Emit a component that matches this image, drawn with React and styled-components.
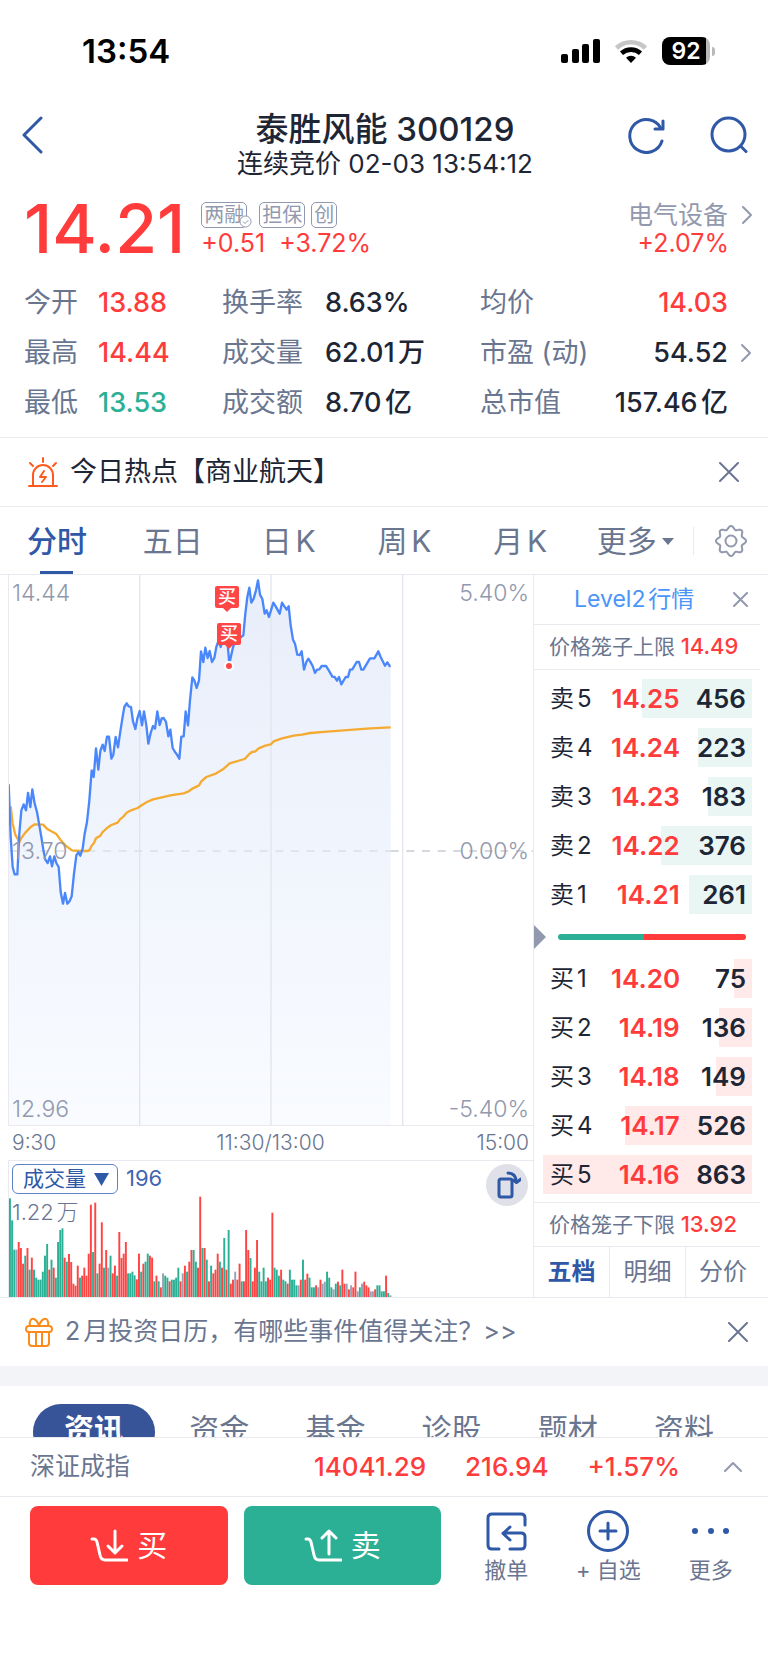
import React from 'react'

import styled, {createGlobalStyle} from 'styled-components'

const red = '#ff3b3b'
const green = '#2cb095'
const blue = '#2f58a6'
const dark = '#1e2635'
const slate = '#6a7690'
const muted = '#9299ae'
const line = '#e9e9ef'

const GlobalStyle = createGlobalStyle`
    * {
        box-sizing: border-box;
    }
    body {
        margin: 0;
        background: #fff;
        color: ${dark};
        font-family: Inter, "Noto Sans CJK SC", sans-serif;
        line-height: 1.25;
        text-autospace: normal;
    }
    button {
        padding: 0;
        border: none;
        background: none;
        color: inherit;
        font: inherit;
        cursor: pointer;
    }
    svg {
        display: block;
        flex: none;
    }
    a {
        color: inherit;
        text-decoration: none;
    }
    dl, dt, dd {
        margin: 0;
    }
`

const StatusBar = styled.div`
    display: flex;
    justify-content: space-between;
    align-items: center;
    padding: 34px 53px 0 82px;
    color: #000;
    font-size: 33px;
    font-weight: 600;
    line-height: 34px;
`

const StatusIcons = styled.div`
    display: flex;
    align-items: center;
    gap: 14px;
`

const Battery = styled.div`
    display: flex;
    align-items: center;
    gap: 2px;
    span {
        width: 48px;
        height: 28px;
        border-radius: 8px;
        background: linear-gradient(90deg, #000 92%, #b9b9b9 92%);
        color: #fff;
        font-size: 23px;
        line-height: 28px;
        text-align: center;
    }
    i {
        width: 3px;
        height: 9px;
        border-radius: 0 4px 4px 0;
        background: #b9b9b9;
    }
`

const Header = styled.header`
    display: grid;
    grid-template-columns: 1fr auto 1fr;
    margin-top: 43px;
    padding: 0 20px 0 22px;
    color: ${blue};
    button {
        height: 48px;
    }
`

const HeaderTitle = styled.div`
    color: ${dark};
    text-align: center;
    h1 {
        margin: 0;
        font-size: 33px;
        font-weight: 500;
        line-height: 36px;
    }
    p {
        margin: 0;
        font-size: 26px;
        line-height: 34px;
    }
`

const HeaderActions = styled.div`
    display: flex;
    justify-content: flex-end;
    align-items: flex-start;
    gap: 45px;
`

const Quote = styled.section`
    display: flex;
    align-items: flex-start;
    margin-top: 17px;
    padding: 0 15px 0 24px;
    color: ${red};
`

const Price = styled.strong`
    font-size: 68px;
    font-weight: 500;
    line-height: 60px;
`

const QuoteColumn = styled.div`
    display: flex;
    flex-direction: column;
    padding-top: 4px;
    font-size: 25px;
    line-height: 30px;
    margin-left: ${props => props.end ? 'auto' : '16px'};
    align-items: ${props => props.end ? 'flex-end' : 'flex-start'};
`

const Tags = styled.div`
    display: flex;
    gap: 6px;
    height: 26px;
`

const Tag = styled.span`
    position: relative;
    padding: 0 2px;
    margin-right: ${props => props.checked ? '6px' : '0'};
    border: 1px solid ${muted};
    border-radius: 5px;
    color: ${muted};
    font-size: 20px;
    line-height: 25px;
    svg {
        position: absolute;
        right: -6px;
        bottom: -1px;
    }
`

const Change = styled.div`
    display: flex;
    gap: 14px;
`

const Industry = styled.a`
    display: flex;
    align-items: center;
    gap: 13px;
    color: ${muted};
    line-height: 26px;
`

const IndustryChange = styled.div`
    padding-right: 24px;
`

const Metrics = styled.dl`
    display: grid;
    grid-template-columns: 74fr 124fr 103fr 155fr 248fr 24px;
    align-items: center;
    margin-top: 20px;
    padding: 0 16px 0 24px;
    font-size: 27px;
    line-height: 50px;
    white-space: nowrap;
    dt {
        color: ${slate};
    }
`

const MetricPair = styled.div`
    display: contents;
`

// the third value of a row shares its column with its label
const WidePair = styled.div`
    display: flex;
    justify-content: space-between;
`

const MetricValue = styled.dd`
    color: ${props => props.color || dark};
    font-weight: 500;
`

const MetricLink = styled.a`
    display: flex;
    justify-content: flex-end;
`

const Banner = styled.div`
    display: flex;
    align-items: center;
    height: 68px;
    padding: 0 20px 0 25px;
    color: ${slate};
    font-size: 25px;
    a {
        flex: 1;
        margin-left: 12px;
    }
    button {
        color: ${slate};
    }
`

const HotBanner = styled(Banner)`
    height: 70px;
    margin-top: 9px;
    padding: 0 29px 0 28px;
    border: solid ${line};
    border-width: 1px 0;
    color: ${dark};
    font-size: 27px;
`

const PeriodTabs = styled.nav`
    display: grid;
    grid-template-columns: repeat(5, 116fr) 114fr 75fr;
    height: 67px;
    font-size: 30px;
`

const PeriodTab = styled.button`
    && {
        position: relative;
        display: flex;
        justify-content: center;
        align-items: center;
        gap: 5px;
        padding: 2px 2px 0 0;
        color: ${props => props.active ? blue : slate};
        font-weight: ${props => props.active ? 500 : 400};
    }
    &::after {
        content: '';
        position: absolute;
        bottom: 0;
        width: 33px;
        height: 3px;
        background: ${props => props.active ? blue : 'transparent'};
    }
`

const SettingsButton = styled.button`
    display: flex;
    justify-content: center;
    align-items: center;
    align-self: center;
    height: 28px;
    && {
        border-left: 1px solid ${line};
        color: ${muted};
    }
`

const Market = styled.section`
    display: grid;
    grid-template-columns: 533fr 235fr;
    border: solid ${line};
    border-width: 1px 0;
`

const Charts = styled.div`
    padding-left: 8px;
    color: ${muted};
`

const Plot = styled.div`
    position: relative;
    display: flex;
    flex-direction: column;
    justify-content: space-between;
    height: 551px;
    border: solid ${line};
    border-width: 0 0 1px 1px;
    svg {
        position: absolute;
        left: 0;
        top: 0;
        width: 100%;
        height: 100%;
    }
`

const ScaleRow = styled.div`
    position: relative;
    display: flex;
    justify-content: space-between;
    padding: 2px 4px 0 3px;
    font-size: 23px;
    font-weight: 300;
    line-height: 32px;
`

const BuyMarker = styled.span`
    position: absolute;
    width: 24px;
    height: 22px;
    margin-left: -12px;
    border-radius: 2px;
    background: #ff4646;
    color: #fff;
    font-size: 18px;
    font-weight: 500;
    line-height: 22px;
    text-align: center;
    &::after {
        content: '';
        position: absolute;
        left: 8px;
        top: 22px;
        border: 4px solid transparent;
        border-top-color: #ff4646;
    }
`

const TradeDot = styled.i`
    position: absolute;
    left: 42%;
    top: 86px;
    width: 10px;
    height: 10px;
    margin-left: -5px;
    border: 2px solid #fff;
    border-radius: 50%;
    background: #ff4646;
`

const TimeAxis = styled.div`
    display: grid;
    grid-template-columns: 1fr auto 1fr;
    padding: 0 4px;
    border-bottom: 1px solid ${line};
    color: ${slate};
    font-size: 21px;
    font-weight: 300;
    line-height: 34px;
    span:last-child {
        text-align: right;
    }
`

const Volume = styled.div`
    position: relative;
    height: 136px;
    padding: 3px 5px 0 3px;
    border-left: 1px solid ${line};
    color: ${slate};
    font-size: 22px;
    > svg {
        position: absolute;
        left: 0;
        bottom: 0;
        width: 100%;
        height: 101px;
    }
    p {
        position: relative;
        margin: 0;
        font-size: 22px;
        font-weight: 300;
        line-height: 36px;
    }
`

const VolumeHead = styled.div`
    display: flex;
    align-items: center;
    gap: 8px;
    height: 30px;
    color: #3f66b3;
    button {
        display: flex;
        align-items: center;
        gap: 8px;
        height: 30px;
        padding: 0 8px 0 10px;
        border: 1px solid #5f82c4;
        border-radius: 6px;
        color: ${blue};
        font-size: 21px;
    }
`

const RotateButton = styled.button`
    position: absolute;
    right: 5px;
    top: 3px;
    display: flex;
    justify-content: center;
    align-items: center;
    width: 42px;
    height: 42px;
    && {
        border-radius: 50%;
        background: #e0e0e9;
        color: ${blue};
    }
`

const OrderBook = styled.aside`
    padding-right: 8px;
    border-left: 1px solid ${line};
`

const LevelLink = styled.div`
    display: flex;
    justify-content: space-between;
    align-items: center;
    height: 50px;
    padding: 0 12px 0 40px;
    border-bottom: 1px solid ${line};
    color: #4b95f8;
    font-size: 23px;
    button {
        color: ${muted};
    }
`

const CageLimit = styled.div`
    height: 45px;
    padding-left: 15px;
    border: solid ${line};
    border-width: ${props => props.lower ? '1px 0' : '0 0 1px'};
    color: ${slate};
    font-size: 21px;
    line-height: 43px;
    white-space: nowrap;
    b {
        margin-left: 3px;
        color: ${red};
        font-size: 22px;
        font-weight: 500;
    }
`

const Depth = styled.div`
    position: relative;
    padding: ${props => props.sell ? '9px 8px 0 9px' : '0 8px 8px 9px'};
`

const DepthTable = styled.table`
    display: block;
    position: relative;
    tbody {
        display: grid;
        gap: 10px;
    }
`

const DepthRow = styled.tr`
    display: grid;
    grid-template-columns: 62fr 69fr 67fr;
    padding: 0 6px 0 7px;
    line-height: 39px;
    td, th {
        padding: 0;
        font-size: 26px;
        font-weight: 600;
        text-align: right;
        white-space: nowrap;
    }
    th {
        font-size: 24px;
        font-weight: 400;
        text-align: left;
    }
    td:nth-child(2) {
        color: ${red};
    }
`

// lies under the table, one bar for each of its rows
const DepthBars = styled.div`
    position: absolute;
    left: 9px;
    right: 8px;
    display: grid;
    justify-items: end;
    gap: 10px;
`

const DepthBar = styled.div`
    height: 39px;
    background: ${props => props.sell ? '#e9f6f3' : '#ffe9e9'};
`

const BalanceRow = styled.div`
    display: flex;
    align-items: center;
    gap: 12px;
    height: 45px;
    padding-right: 14px;
`

const Balance = styled.div`
    flex: 1;
    height: 6px;
    border-radius: 3px;
    background: linear-gradient(90deg, ${green} 46%, ${red} 46%);
`

const BookTabs = styled.div`
    display: grid;
    grid-template-columns: 75fr 76fr 75fr;
    height: 50px;
`

const BookTab = styled.button`
    && {
        border-left: ${props => props.active ? 'none' : `1px solid ${line}`};
        color: ${props => props.active ? blue : slate};
        font-size: 24px;
        font-weight: ${props => props.active ? 700 : 400};
    }
`

const Divider = styled.div`
    height: 20px;
    background: #f3f4f7;
`

const InfoTabs = styled.nav`
    display: grid;
    grid-template-columns: 128fr repeat(5, 116fr);
    align-items: start;
    height: 51px;
    padding: 18px 26px 0 33px;
    overflow: hidden;
`

const InfoTab = styled.button`
    && {
        height: 56px;
        margin-right: ${props => props.active ? '6px' : '0'};
        padding-bottom: 4px;
        border-radius: 28px;
        background: ${props => props.active ? '#385499' : 'none'};
        color: ${props => props.active ? '#fff' : slate};
        font-size: 30px;
        font-weight: ${props => props.active ? 700 : 400};
    }
`

const IndexBar = styled.div`
    display: flex;
    align-items: center;
    gap: 39px;
    height: 60px;
    padding: 0 25px 0 30px;
    border: solid ${line};
    border-width: 1px 0;
    color: ${red};
    font-size: 26px;
    font-weight: 500;
    span {
        flex: 1;
        color: ${slate};
        font-size: 25px;
        font-weight: 400;
    }
    button {
        margin-left: 4px;
        color: ${muted};
    }
`

const BottomBar = styled.footer`
    display: grid;
    grid-template-columns: 411fr 307fr;
    gap: 14px;
    padding: 9px 6px 78px 30px;
`

const TradeButtons = styled.div`
    display: grid;
    grid-template-columns: 1fr 1fr;
    gap: 16px;
`

const TradeButton = styled.button`
    && {
        display: flex;
        justify-content: center;
        align-items: center;
        gap: 9px;
        height: 79px;
        border-radius: 8px;
        background: ${props => props.sell ? green : red};
        color: #fff;
        font-size: 30px;
    }
`

const Tools = styled.div`
    display: grid;
    grid-template-columns: repeat(3, 1fr);
`

const Tool = styled.button`
    && {
        display: flex;
        flex-direction: column;
        align-items: center;
        gap: 3px;
        padding-top: 4px;
        color: ${slate};
        font-size: 22px;
        line-height: 30px;
    }
    svg {
        color: ${blue};
    }
`

const Icon = ({w, h, stroke = 2, children}) => (
    <svg width={w} height={h} viewBox={`0 0 ${w} ${h}`} fill="none" stroke="currentColor"
        strokeWidth={stroke} strokeLinecap="round" strokeLinejoin="round" aria-hidden="true">
        {children}
    </svg>
)

const CloseIcon = ({size = 20}) => (
    <Icon w={size} h={size}><path d={`M1 1L${size - 1} ${size - 1}M${size - 1} 1L1 ${size - 1}`} /></Icon>
)

const ArrowRight = () => (
    <Icon w={12} h={20}><path d="M2 2l8 8-8 8" stroke={muted} /></Icon>
)

const metrics = [
    [['今开', '13.88', red], ['换手率', '8.63%'], ['均价', '14.03', red]],
    [['最高', '14.44', red], ['成交量', '62.01万'], ['市盈 (动)', '54.52', dark, '#pe']],
    [['最低', '13.53', green], ['成交额', '8.70亿'], ['总市值', '157.46亿']],
]

const sells = [['卖5', '14.25', 456], ['卖4', '14.24', 223], ['卖3', '14.23', 183], ['卖2', '14.22', 376], ['卖1', '14.21', 261]]
const buys = [['买1', '14.20', 75], ['买2', '14.19', 136], ['买3', '14.18', 149], ['买4', '14.17', 526], ['买5', '14.16', 863]]

// places of the buy orders in the plot, in percent
const trades = [{x: 41.6, y: 2}, {x: 42, y: 8.8}]

const pricePoints = `25,642 31,800 37,890 43,912 51,912 57,790 63,720 70,702 77,720 83,668 90,710 96,657
    103,700 110,725 117,765 123,800 129,838 135,868 142,878 149,858 155,888 162,858 168,878 175,890
    181,965 188,1000 194,968 201,1000 208,992 214,978 221,910 228,855 234,846 240,856 247,835 253,790
    260,755 267,690 274,600 280,620 287,534 294,598 300,542 307,523 313,542 320,499 326,499 333,565
    339,553 346,500 353,531 359,490 366,445 372,410 379,399 385,408 392,410 398,453 405,476 411,445
    418,422 425,465 431,423 438,465 444,520 451,488 458,467 464,475 471,423 478,464 484,444 490,443
    497,455 504,498 510,478 517,533 524,545 530,553 537,565 543,499 550,498 556,423 563,465 569,390
    576,321 582,330 589,353 596,330 602,243 609,275 615,232 622,263 628,242 635,275 642,263 648,230
    655,210 661,230 668,205 681,210 687,280 697,235 703,215 710,200 722,200 729,195 735,130 741,80
    747,52 753,97 760,85 767,60 773,30 779,73 786,86 793,130 799,120 806,140 819,97 826,108 838,130
    845,97 852,108 859,118 865,108 871,165 878,208 884,220 891,253 898,254 904,243 911,298 918,275
    924,265 931,276 937,287 944,308 950,298 957,297 964,287 977,287 984,298 996,319 1003,320 1010,331
    1016,320 1023,342 1036,320 1043,320 1049,298 1056,297 1069,275 1076,275 1083,298 1089,298 1109,264
    1122,264 1134,243 1141,260 1154,286 1161,276 1168,287 1171,287`

const averagePoints = `31,708 37,760 45,793 57,815 63,803 75,787 90,771 103,762 128,763 142,777 168,791
    180,808 195,825 215,840 240,842 262,842 268,838 274,826 281,818 287,804 300,796 306,786 320,773
    333,764 352,757 359,747 370,738 379,727 392,720 412,713 425,704 440,695 458,687 485,681 510,675
    550,669 565,663 578,654 596,645 603,633 618,620 648,609 668,597 688,579 733,566 745,553 755,545
    765,543 775,534 795,526 812,522 820,513 845,504 880,496 905,493 930,488 990,483 1060,478 1110,474
    1171,471`

// one bar a minute: r up, g down, n flat
const volumes = `g296 g230 g142 n142 r165 r147 r100 g124 r147 g82 r118 g82 g58 g52 g52 g76 g124 g159 r82
    g112 r88 g58 g165 g201 g206 r118 g106 r129 r105 r40 r34 r94 g58 r64 r88 r64 r130 r277 g135 r283
    g71 r100 r224 g88 r141 n88 g124 r71 r94 g64 r195 r117 r130 r165 g71 g71 g76 g65 r53 r130 g76 r100
    g106 g130 r124 r118 g47 r64 g47 r29 n71 g64 g58 r47 g52 g52 g58 g88 r47 n71 r94 g76 r106 r141
    g141 g106 r88 r301 g147 r147 g112 r47 g94 r71 r82 r130 g106 r88 g177 r82 g201 r40 r52 n76 r52
    r100 g47 r47 r201 r141 g117 r47 r88 r171 g76 g47 g88 g47 r58 r52 r253 g88 g82 g64 r82 g52 g47
    r40 g82 g52 g52 g35 n35 r52 g112 r52 r70 g58 g29 g29 r35 n29 r52 n40 n46 g76 g58 g29 n23 g40
    r46 g35 r82 r40 n40 r23 n35 r29 r76 n17 g29 n40 r46 r35 r29 n17 n17 r23 g35 g35 g17 g17 r64 g12
    n5`.split(/\s+/)

const barColors = {r: '#ff4444', g: green, n: '#9aa1b3'}

const PriceChart = () => (
    <svg viewBox="26 14 1572 1650" preserveAspectRatio="none" fill="none" aria-hidden="true">
        <defs>
            <linearGradient id="area" x1="0" y1="0" x2="0" y2="1">
                <stop offset="0" stopColor="#e8eefa" />
                <stop offset="1" stopColor="#f9fbff" />
            </linearGradient>
        </defs>
        <polygon points={`25,1664 ${pricePoints} 1171,1664`} fill="url(#area)" />
        <path d="M418 14V1664M812 14V1664M1207 14V1664" stroke="#e4e5ec" strokeWidth="4" />
        <path d="M26 842H1171" stroke="#dcdee8" strokeWidth="5" strokeDasharray="24 23" />
        <path d="M1171 842H1600" stroke="#c9cbd7" strokeWidth="5" strokeDasharray="24 23" />
        <polyline points={averagePoints} stroke="#f5aa31" strokeWidth="7" strokeLinejoin="round" />
        <polyline points={pricePoints} stroke="#4a87fb" strokeWidth="7" strokeLinejoin="round" />
    </svg>
)

const VolumeChart = () => (
    <svg viewBox="27 289 1572 303" preserveAspectRatio="none" aria-hidden="true">
        {volumes.map((item, i) => (
            <rect key={i} x={27 + i * 6.56} y={592 - item.slice(1)} width="5.8"
                height={item.slice(1)} fill={barColors[item[0]]} />
        ))}
    </svg>
)

const DepthBlock = ({rows, sell}) => (
    <Depth sell={sell}>
        <DepthBars>
            {rows.map(([label, , amount]) => (
                <DepthBar key={label} sell={sell} style={{width: `${amount / 8.63}%`}} />
            ))}
        </DepthBars>
        <DepthTable>
            <tbody>
                {rows.map(([label, price, amount]) => (
                    <DepthRow key={label}>
                        <th scope="row">{label}</th>
                        <td>{price}</td>
                        <td>{amount}</td>
                    </DepthRow>
                ))}
            </tbody>
        </DepthTable>
    </Depth>
)

const SignalIcons = () => (
    <StatusIcons>
        <svg width="39" height="24" viewBox="0 0 39 24" aria-hidden="true">
            <rect x="0" y="15" width="7" height="9" rx="2" />
            <rect x="11" y="10" width="7" height="14" rx="2" />
            <rect x="21" y="5" width="7" height="19" rx="2" />
            <rect x="32" y="0" width="7" height="24" rx="2" />
        </svg>
        <svg width="34" height="24" viewBox="0 0 34 24" fill="none" strokeWidth="4.6" aria-hidden="true">
            <path d="M2.500 9a21 21 0 0 1 29 0" stroke="#c6c6c6" />
            <path d="M7.500 14.300a14 14 0 0 1 19 0" stroke="#000" />
            <path d="M17 24l-5-5.200a7.400 7.400 0 0 1 10 0z" fill="#000" />
        </svg>
        <Battery><span>92</span><i /></Battery>
    </StatusIcons>
)

const gear = Array.from({length: 65}, (_, i) => {
    const angle = i / 64 * Math.PI * 2
    const r = 13.4 + 1.7 * Math.cos(angle * 8)
    return `${(16 + r * Math.sin(angle)).toFixed(2)},${(16 - r * Math.cos(angle)).toFixed(2)}`
}).join(' ')

export default function App() {
    return (
        <>
            <GlobalStyle />
            <StatusBar>
                <span>13:54</span>
                <SignalIcons />
            </StatusBar>

            <Header>
                <div>
                    <button type="button" aria-label="返回">
                        <Icon w={22} h={38} stroke={3}><path d="M19 2L2 19l17 17" /></Icon>
                    </button>
                </div>
                <HeaderTitle>
                    <h1>泰胜风能 300129</h1>
                    <p>连续竞价 02-03 13:54:12</p>
                </HeaderTitle>
                <HeaderActions>
                    <button type="button" aria-label="刷新">
                        <Icon w={38} h={38} stroke={3}>
                            <path d="M35 25A16.500 16.500 0 1 1 34 12.500" />
                            <path d="M36 5v8h-8" />
                        </Icon>
                    </button>
                    <button type="button" aria-label="搜索">
                        <Icon w={38} h={38} stroke={3}>
                            <circle cx="18.500" cy="18.500" r="16.500" />
                            <path d="M30.500 30l5.500 5.500" />
                        </Icon>
                    </button>
                </HeaderActions>
            </Header>

            <Quote>
                <Price>14.21</Price>
                <QuoteColumn>
                    <Tags>
                        <Tag checked>
                            两融
                            <svg width="13" height="13" viewBox="0 0 13 13" fill="#fff" stroke={muted} aria-hidden="true">
                                <circle cx="6.500" cy="6.500" r="5.500" />
                                <path d="M4 6.500l2 2 3.500-3.500" fill="none" />
                            </svg>
                        </Tag>
                        <Tag>担保</Tag>
                        <Tag>创</Tag>
                    </Tags>
                    <Change><span>+0.51</span><span>+3.72%</span></Change>
                </QuoteColumn>
                <QuoteColumn end>
                    <Industry href="#industry">电气设备<ArrowRight /></Industry>
                    <IndustryChange>+2.07%</IndustryChange>
                </QuoteColumn>
            </Quote>

            <Metrics>
                {metrics.map(row => row.map(([label, value, color, href], j) => {
                    const Pair = j === 2 ? WidePair : MetricPair
                    return (
                        <React.Fragment key={label}>
                            <Pair>
                                <dt>{label}</dt>
                                <MetricValue color={color}>{value}</MetricValue>
                            </Pair>
                            {j === 2 && (
                                <div>
                                    {href && <MetricLink href={href} aria-label={label}><ArrowRight /></MetricLink>}
                                </div>
                            )}
                        </React.Fragment>
                    )
                }))}
            </Metrics>

            <HotBanner>
                <svg width="30" height="30" viewBox="0 0 30 30" fill="none" stroke="#ff5a1f" strokeWidth="2" strokeLinecap="round" aria-hidden="true">
                    <path d="M1 29h28M5 29V18a10 10 0 0 1 20 0v11" />
                    <path d="M15 1v4M2 6l3 3M28 6l-3 3" />
                    <path d="M16 14l-4 6h6l-4 5" strokeLinejoin="round" />
                </svg>
                <a href="#hot">今日热点【商业航天】</a>
                <button type="button" aria-label="关闭"><CloseIcon /></button>
            </HotBanner>

            <PeriodTabs>
                <PeriodTab type="button" active>分时</PeriodTab>
                <PeriodTab type="button">五日</PeriodTab>
                <PeriodTab type="button">日K</PeriodTab>
                <PeriodTab type="button">周K</PeriodTab>
                <PeriodTab type="button">月K</PeriodTab>
                <PeriodTab type="button">
                    更多
                    <svg width="12" height="7" viewBox="0 0 12 7" fill={slate} aria-hidden="true"><path d="M0 0h12L6 7z" /></svg>
                </PeriodTab>
                <SettingsButton type="button" aria-label="设置">
                    <Icon w={32} h={32}>
                        <polygon points={gear} />
                        <circle cx="16" cy="16" r="5.500" />
                    </Icon>
                </SettingsButton>
            </PeriodTabs>

            <Market>
                <Charts>
                    <Plot>
                        <PriceChart />
                        <ScaleRow><span>14.44</span><span>5.40%</span></ScaleRow>
                        <ScaleRow><span>13.70</span><span>0.00%</span></ScaleRow>
                        <ScaleRow><span>12.96</span><span>-5.40%</span></ScaleRow>
                        {trades.map(({x, y}) => (
                            <BuyMarker key={y} style={{left: `${x}%`, top: `${y}%`}}>买</BuyMarker>
                        ))}
                        <TradeDot />
                    </Plot>
                    <TimeAxis><span>9:30</span><span>11:30/13:00</span><span>15:00</span></TimeAxis>
                    <Volume>
                        <VolumeChart />
                        <VolumeHead>
                            <button type="button">
                                成交量
                                <svg width="15" height="13" viewBox="0 0 15 13" fill={blue} aria-hidden="true"><path d="M0 0h15L7.500 13z" /></svg>
                            </button>
                            <span>196</span>
                        </VolumeHead>
                        <p>1.22万</p>
                        <RotateButton type="button" aria-label="横屏">
                            <Icon w={28} h={28} stroke={3}>
                                <rect x="6" y="8" width="13" height="18" rx="2" />
                                <path d="M15 2c5 0 8 3 8.500 9M23.500 11.500L28 8M23.500 11.500L20 9" />
                            </Icon>
                        </RotateButton>
                    </Volume>
                </Charts>

                <OrderBook>
                    <LevelLink>
                        <a href="#level2">Level2行情</a>
                        <button type="button" aria-label="关闭"><CloseIcon size={15} /></button>
                    </LevelLink>
                    <CageLimit>价格笼子上限<b>14.49</b></CageLimit>
                    <DepthBlock rows={sells} sell />
                    <BalanceRow>
                        <svg width="12" height="24" viewBox="0 0 12 24" fill={muted} aria-hidden="true"><path d="M0 0l12 12L0 24z" /></svg>
                        <Balance />
                    </BalanceRow>
                    <DepthBlock rows={buys} />
                    <CageLimit lower>价格笼子下限<b>13.92</b></CageLimit>
                    <BookTabs>
                        <BookTab type="button" active>五档</BookTab>
                        <BookTab type="button">明细</BookTab>
                        <BookTab type="button">分价</BookTab>
                    </BookTabs>
                </OrderBook>
            </Market>

            <Banner>
                <svg width="28" height="30" viewBox="0 0 28 30" fill="none" stroke="#fb8c1c" strokeWidth="2" aria-hidden="true">
                    <rect x="1" y="9" width="26" height="6" rx="3" />
                    <path d="M4 15v11a3 3 0 0 0 3 3h14a3 3 0 0 0 3-3V15M11 15v14M17 15v14" />
                    <path d="M5 9c-1-5 1-8 4-7 2 1 4 3 5 7 1-4 3-6 5-7 3-1 5 2 4 7" />
                </svg>
                <a href="#calendar">2月投资日历，有哪些事件值得关注？&gt;&gt;</a>
                <button type="button" aria-label="关闭"><CloseIcon /></button>
            </Banner>
            <Divider />

            <InfoTabs>
                <InfoTab type="button" active>资讯</InfoTab>
                {['资金', '基金', '诊股', '题材', '资料'].map(name => (
                    <InfoTab type="button" key={name}>{name}</InfoTab>
                ))}
            </InfoTabs>

            <IndexBar>
                <span>深证成指</span>
                <div>14041.29</div>
                <div>216.94</div>
                <div>+1.57%</div>
                <button type="button" aria-label="展开">
                    <Icon w={20} h={12}><path d="M2 10l8-8 8 8" /></Icon>
                </button>
            </IndexBar>

            <BottomBar>
                <TradeButtons>
                    <TradeButton type="button">
                        <Icon w={38} h={34} stroke={3}>
                            <path d="M2 10h2q2 0 3 3l3 13q1 5 5 5h22" />
                            <path d="M25 2v22M18 17l7 7 7-7" />
                        </Icon>
                        买
                    </TradeButton>
                    <TradeButton type="button" sell>
                        <Icon w={38} h={34} stroke={3}>
                            <path d="M2 10h2q2 0 3 3l3 13q1 5 5 5h22" />
                            <path d="M25 25V2M18 9l7-7 7 7" />
                        </Icon>
                        卖
                    </TradeButton>
                </TradeButtons>
                <Tools>
                    <Tool type="button">
                        <Icon w={42} h={42} stroke={3}>
                            <path d="M40 15V8q0-4-4-4H7Q3 4 3 8v27q0 4 4 4h7" />
                            <path d="M25 39h11q4 0 4-4v-8q0-4-4-4H18M25 17l-7 6.500 7 6.500" />
                        </Icon>
                        撤单
                    </Tool>
                    <Tool type="button">
                        <Icon w={42} h={42} stroke={3}>
                            <circle cx="21" cy="21" r="19.500" />
                            <path d="M21 13v16M13 21h16" />
                        </Icon>
                        + 自选
                    </Tool>
                    <Tool type="button">
                        <svg width="42" height="42" viewBox="0 0 42 42" fill={blue} aria-hidden="true">
                            <circle cx="5" cy="21" r="3" />
                            <circle cx="21" cy="21" r="3" />
                            <circle cx="36" cy="21" r="3" />
                        </svg>
                        更多
                    </Tool>
                </Tools>
            </BottomBar>
        </>
    )
}
